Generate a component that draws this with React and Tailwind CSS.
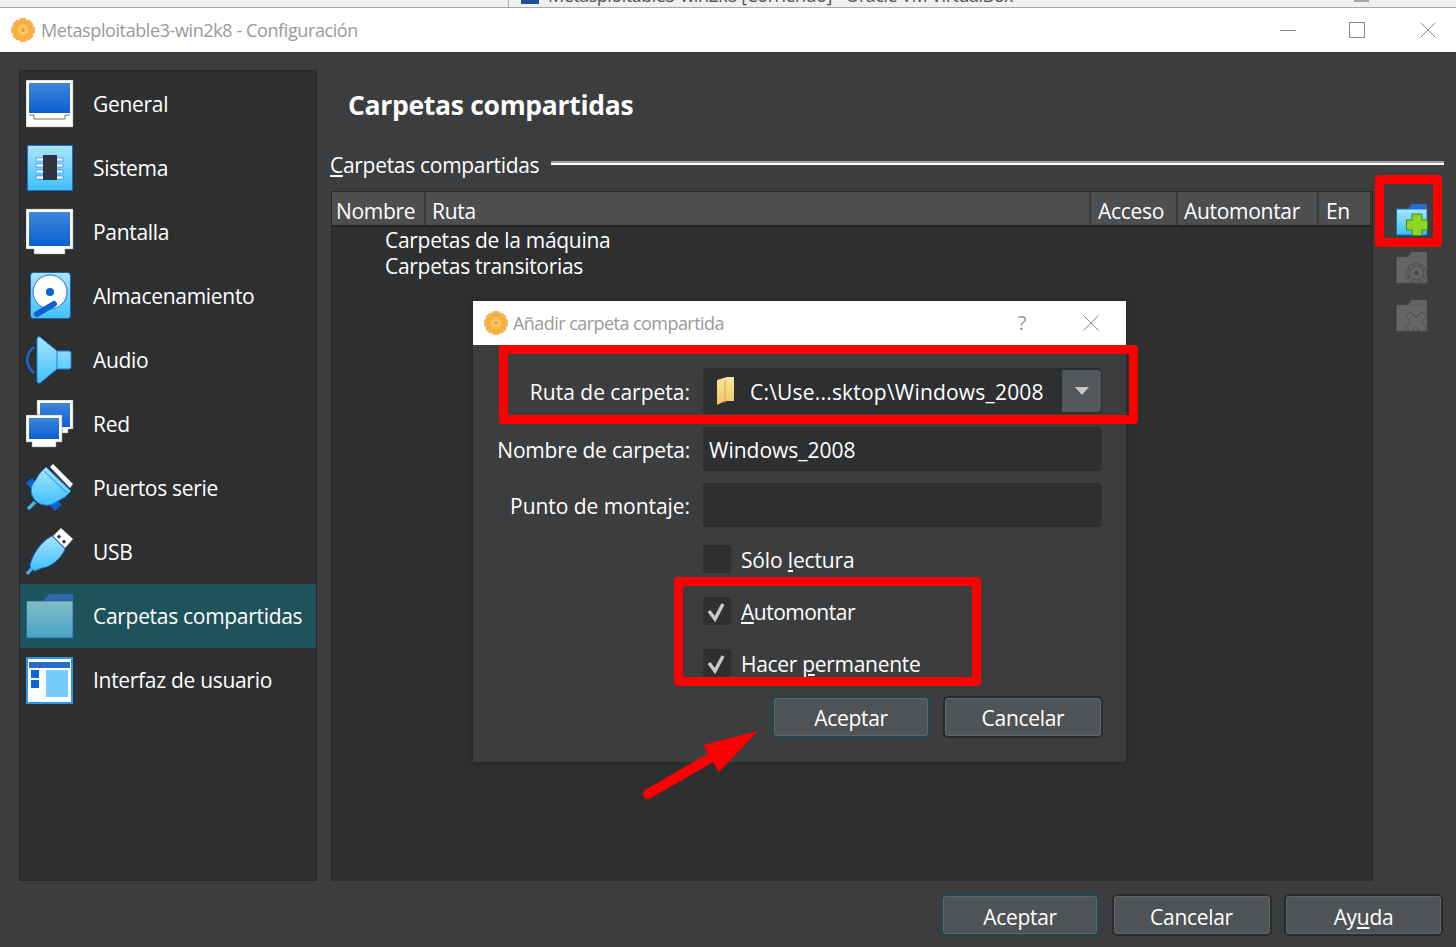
import React from "react";

const GRAD_BLUE = ["#3f86dc", "#0a5fcf"];

// shared gradients for every drawn icon
const IconDefs = () => (
  <svg width="0" height="0" className="absolute">
    <defs>
      <linearGradient id="screen" x1="0" y1="0" x2="0" y2="1">
        <stop offset="0" stopColor={GRAD_BLUE[0]} />
        <stop offset="1" stopColor={GRAD_BLUE[1]} />
      </linearGradient>
      <linearGradient id="sky" x1="0" y1="0" x2="0" y2="1">
        <stop offset="0" stopColor="#a8e6ff" />
        <stop offset="1" stopColor="#3fc0ff" />
      </linearGradient>
      <linearGradient id="teal" x1="0" y1="0" x2="0" y2="1">
        <stop offset="0" stopColor="#82bcc6" />
        <stop offset="1" stopColor="#48a4c8" />
      </linearGradient>
      <linearGradient id="manila" x1="0" y1="0" x2="0" y2="1">
        <stop offset="0" stopColor="#fbe7a0" />
        <stop offset="1" stopColor="#f0c560" />
      </linearGradient>
      <radialGradient id="orange">
        <stop offset="0" stopColor="#ffe08a" />
        <stop offset="1" stopColor="#f7a52e" />
      </radialGradient>
    </defs>
  </svg>
);

const Svg = ({ children }) => (
  <svg width="48" height="48" viewBox="0 0 48 48" className="shrink-0">
    {children}
  </svg>
);

const GeneralIcon = () => (
  <Svg>
    <rect x="0" y="0" width="47" height="47" fill="#fff" stroke="#8a8a8a" strokeWidth="0.5" />
    <rect x="3" y="3" width="41" height="30" fill="url(#screen)" />
    <path d="M3 35H8V39H39V35H44" fill="none" stroke="#777" strokeWidth="1" />
  </Svg>
);

const SystemIcon = () => (
  <Svg>
    <rect x="1.5" y="1.5" width="45" height="45" fill="url(#sky)" stroke="#1c6fd0" />
    {[14, 20, 26, 32].map((y) => (
      <rect key={y} x="10" y={y} width="27" height="3" fill="#fff" stroke="#2a78d4" strokeWidth="0.6" />
    ))}
    <rect x="17" y="11" width="14" height="25" fill="#2f3340" />
  </Svg>
);

const ScreenIcon = () => (
  <Svg>
    <path d="M0 1H47V41H39V46H8V41H0Z" fill="#fff" stroke="#8a8a8a" strokeWidth="0.5" />
    <rect x="3" y="4" width="41" height="34" fill="url(#screen)" />
  </Svg>
);

const StorageIcon = () => (
  <Svg>
    <rect x="4.5" y="0.5" width="40" height="46" rx="3" fill="url(#sky)" stroke="#1c5fb0" />
    <circle cx="24" cy="20" r="17" fill="#fff" stroke="#1c6fd0" />
    <circle cx="24" cy="20" r="4" fill="#0d62cc" />
    <path d="M11 42L28 32" stroke="#0d62cc" strokeWidth="6" strokeLinecap="round" />
  </Svg>
);

const AudioIcon = () => (
  <Svg>
    <path d="M8 11C-1 18 -1 29 8 37" fill="none" stroke="#1a68c8" strokeWidth="2.5" />
    <path d="M11 3Q11 0 14 1L31 15H43Q45 15 45 17V31Q45 33 43 33H31L14 47Q11 48 11 45Z" fill="url(#sky)" stroke="#1c80e0" />
    <path d="M31 15V33" stroke="#1c80e0" />
  </Svg>
);

const NetworkIcon = () => (
  <Svg>
    <path d="M11 0H47V29H42V33H36V15H11Z" fill="#fff" stroke="#888" strokeWidth="0.5" />
    <rect x="14" y="3" width="30" height="24" fill="url(#screen)" />
    <path d="M0 15H36V42H30V47H6V42H0Z" fill="#fff" stroke="#888" strokeWidth="0.5" />
    <rect x="3" y="18" width="30" height="21" fill="url(#screen)" />
  </Svg>
);

const SerialIcon = () => (
  <Svg>
    <path d="M0 19L6 14L11 19L5 25Z" fill="#0d62cc" />
    <path d="M24 42L31 36L36 41L29 47Z" fill="#0d62cc" />
    <path d="M9 38L2 45" stroke="#3fb4f8" strokeWidth="3.5" />
    <path d="M14 9L20 3L45 27L39 33L30 38C24 43 14 42 9 36C4 30 4 22 9 17Z" fill="url(#sky)" stroke="#1c80e0" />
    <path d="M18 7L41 29" stroke="#1c80e0" />
    <path d="M24 3L27 0L47 20L44 24Z" fill="#fff" stroke="#888" strokeWidth="0.5" />
  </Svg>
);

const UsbIcon = () => (
  <Svg>
    <path d="M27 8L35 0L47 11L39 20Z" fill="#fff" stroke="#888" strokeWidth="0.5" />
    <rect x="32" y="7" width="3" height="3" fill="#333" transform="rotate(45 33 8)" />
    <rect x="37" y="12" width="3" height="3" fill="#333" transform="rotate(45 38 13)" />
    <path d="M26 8L39 21C36 28 28 38 16 40L8 43L4 38C6 28 14 14 26 8Z" fill="url(#sky)" stroke="#1c80e0" />
    <path d="M7 39L1 46" stroke="#3fb4f8" strokeWidth="3" />
  </Svg>
);

const FolderIcon = () => (
  <Svg>
    <path d="M17 9L23 2H47V10Z" fill="#2a68b0" />
    <rect x="0.5" y="9" width="46.5" height="37" fill="url(#teal)" stroke="#24619f" strokeWidth="0.8" />
  </Svg>
);

const UiIcon = () => (
  <Svg>
    <rect x="1" y="2" width="45" height="45" fill="#fff" stroke="#2a98ee" strokeWidth="2" />
    <rect x="3" y="6" width="41" height="6" fill="#2a6cc8" />
    <rect x="5" y="14" width="8" height="8" fill="#0d66d6" />
    <rect x="5" y="24" width="8" height="8" fill="#0d66d6" />
    <rect x="20" y="14" width="22" height="27" fill="#76ccff" />
  </Svg>
);

const TEETH = [0, 45, 90, 135, 180, 225, 270, 315];

const GearLogo = () => (
  <svg width="24" height="24" viewBox="0 0 24 24" className="shrink-0">
    {TEETH.map((a) => (
      <rect key={a} x="8.5" y="0.5" width="7" height="7" rx="1.5" fill="#fbb648" stroke="#e0932a" strokeWidth="0.5" transform={`rotate(${a} 12 12)`} />
    ))}
    <circle cx="12" cy="12" r="8.5" fill="url(#orange)" />
    <circle cx="12" cy="12" r="2" fill="#ee9a30" />
  </svg>
);

const GrayFolder = ({ children }) => (
  <svg width="32" height="32" viewBox="0 0 32 32" className="shrink-0">
    <path d="M11 5L16 0H31V6Z" fill="#616263" />
    <rect x="0.5" y="5" width="30.5" height="26" fill="#646566" stroke="#555" strokeWidth="0.6" />
    {children}
  </svg>
);

const AddFolder = () => (
  <svg width="32" height="32" viewBox="0 0 32 32" className="shrink-0">
    <path d="M11 5L16 0H31V6Z" fill="#2a6cc8" />
    <rect x="0.5" y="5" width="30.5" height="26" fill="url(#sky)" stroke="#1c6fd0" />
    <path d="M16 10H26V16H31.5V26H26V31.5H16V26H10.5V16H16Z" fill="#8fd428" stroke="#3f8a10" strokeWidth="1" />
  </svg>
);

const SIDEBAR = [
  { label: "General", Icon: GeneralIcon },
  { label: "Sistema", Icon: SystemIcon },
  { label: "Pantalla", Icon: ScreenIcon },
  { label: "Almacenamiento", Icon: StorageIcon },
  { label: "Audio", Icon: AudioIcon },
  { label: "Red", Icon: NetworkIcon },
  { label: "Puertos serie", Icon: SerialIcon },
  { label: "USB", Icon: UsbIcon },
  { label: "Carpetas compartidas", Icon: FolderIcon, active: true },
  { label: "Interfaz de usuario", Icon: UiIcon },
];

const COLUMNS = [
  { label: "Nombre", w: "w-[94px]", pad: "pl-[4px]" },
  { label: "Ruta", w: "w-[665px]", pad: "pl-[6px]" },
  { label: "Acceso", w: "w-[87px]", pad: "pl-[7px]" },
  { label: "Automontar", w: "w-[141px]", pad: "pl-[6px]" },
  { label: "En", w: "w-[53px]", pad: "pl-[7px]" },
];

const Button = ({ children, primary, w = "w-[158px]", pt = "pt-[6px]" }) => (
  <div
    className={`${w} ${pt} flex h-[42px] items-center justify-center rounded-[5px] border-2 bg-[#505355] text-[21px] text-white shadow-[inset_0_0_0_1px_#636567] ${
      primary ? "border-[#1d4a50]" : "border-[#2a2b2d]"
    }`}
  >
    {children}
  </div>
);

const Check = ({ checked }) => (
  <div className="flex h-[28px] w-[28px] items-center justify-center rounded-[2px] bg-[#2e2f31]">
    {checked && (
      <svg width="28" height="28" viewBox="0 0 28 28">
        <path d="M6 14L12 22L20 7" fill="none" stroke="#c8c8c8" strokeWidth="3.5" />
      </svg>
    )}
  </div>
);

const WindowClose = ({ size = 16 }) => (
  <svg width={size} height={size} viewBox="0 0 16 16">
    <path d="M0.5 0.5L15.5 15.5M15.5 0.5L0.5 15.5" stroke="#8a8a8a" strokeWidth="1" />
  </svg>
);

const FieldLabel = ({ children, spacing }) => (
  <div className={`w-[217px] shrink-0 pt-[4px] text-right text-[21px] text-white ${spacing}`}>{children}</div>
);

const AddDialog = () => (
  <div className="absolute left-[473px] top-[301px] flex h-[461px] w-[653px] flex-col bg-[#3c3d3f] shadow-[0_0_3px_#222]">
    <div className="flex h-[44px] shrink-0 items-center bg-white pl-[11px]">
      <GearLogo />
      <span className="ml-[5px] text-[18px] tracking-[-0.55px] text-[#9a9a9a]">Añadir carpeta compartida</span>
      <span className="ml-auto mr-[57px] text-[20px] text-[#9a9a9a]">?</span>
      <div className="mr-[27px]">
        <WindowClose />
      </div>
    </div>
    <div className="flex flex-col pt-[23px]">
      <div className="mr-[24px] flex h-[46px] items-center">
        <FieldLabel spacing="tracking-[0px]">Ruta de carpeta:</FieldLabel>
        <div className="ml-[13px] flex h-full flex-1 items-center rounded-[4px] bg-[#2e2f31] pl-[13px]">
          <svg width="20" height="28" viewBox="0 0 20 28" className="shrink-0">
            <path d="M1 3L11 0H18V24H9L1 28Z" fill="url(#manila)" />
            <path d="M9 3V26" stroke="#d9ac50" />
          </svg>
          <span className="ml-[14px] pt-[4px] text-[21px] tracking-[0.2px] text-white">C:\Use...sktop\Windows_2008</span>
          <div className="ml-auto mr-[1px] flex h-[42px] w-[39px] items-center justify-center rounded-r-[4px] bg-[#54575a]">
            <div className="h-0 w-0 border-x-[7px] border-t-[8px] border-x-transparent border-t-[#c9c9c9]" />
          </div>
        </div>
      </div>
      <div className="mr-[24px] mt-[13px] flex h-[44px] items-center">
        <FieldLabel spacing="tracking-[-0.2px]">Nombre de carpeta:</FieldLabel>
        <div className="ml-[13px] flex h-full flex-1 items-center rounded-[4px] bg-[#2e2f31] pl-[6px] pt-[4px] text-[21px] tracking-[0px] text-white">
          Windows_2008
        </div>
      </div>
      <div className="mr-[24px] mt-[12px] flex h-[44px] items-center">
        <FieldLabel spacing="tracking-[-0.05px]">Punto de montaje:</FieldLabel>
        <div className="ml-[13px] h-full flex-1 rounded-[4px] bg-[#2e2f31]" />
      </div>
      <div className="ml-[230px] mt-[18px] flex flex-col gap-[24px] text-[21px] text-white">
        <div className="flex h-[28px] items-center gap-[10px]">
          <Check />
          <span className="pt-[4px] tracking-[-0.15px]">
            Sólo <span className="underline">l</span>ectura
          </span>
        </div>
        <div className="flex h-[28px] items-center gap-[10px]">
          <Check checked />
          <span className="pt-[4px] tracking-[-0.5px]">
            <span className="underline">A</span>utomontar
          </span>
        </div>
        <div className="flex h-[28px] items-center gap-[10px]">
          <Check checked />
          <span className="pt-[4px]">
            Hacer <span className="underline">p</span>ermanente
          </span>
        </div>
      </div>
      <div className="mr-[23px] mt-[19px] flex justify-end gap-[13px]">
        <Button primary pt="pt-[4px]">Aceptar</Button>
        <Button w="w-[160px]" pt="pt-[4px]">Cancelar</Button>
      </div>
    </div>
  </div>
);

const Annotations = () => (
  <>
    <div className="absolute left-[499px] top-[345px] h-[79px] w-[639px] rounded-[4px] border-[9px] border-[#ff0000]" />
    <div className="absolute left-[674px] top-[577px] h-[109px] w-[307px] rounded-[4px] border-[9px] border-[#ff0000]" />
    <div className="absolute left-[1375px] top-[175px] h-[72px] w-[67px] rounded-[4px] border-[9px] border-[#ff0000]" />
    <svg className="absolute left-[640px] top-[725px]" width="125" height="80" viewBox="0 0 125 80">
      <path d="M118 6L63 20L79 47Z" fill="#ff0000" />
      <path d="M8 69L72 32" stroke="#ff0000" strokeWidth="10" strokeLinecap="round" />
    </svg>
  </>
);

export default function App() {
  return (
    <div className="relative flex h-[947px] w-[1456px] flex-col overflow-hidden bg-[#3c3d3f] font-['Open_Sans',sans-serif] tracking-[-0.3px]">
      <IconDefs />

      {/* window behind, only its bottom edge shows */}
      <div className="relative h-[8px] shrink-0 overflow-hidden border-b border-[#a8a8a8] bg-[#f0f0f0]">
        <div className="absolute left-[508px] top-0 h-full w-px bg-[#a8a8a8]" />
        <div className="absolute left-[521px] top-[-14px] h-[18px] w-[18px] bg-[#1c4f9c]" />
        <span className="absolute left-[548px] top-[-18px] whitespace-nowrap text-[18px] tracking-[-0.5px] text-[#555]">
          Metasploitable3-win2k8 [Corriendo] - Oracle VM VirtualBox
        </span>
        <div className="absolute left-[1354px] top-0 h-[2px] w-[15px] bg-[#a8a8a8]" />
      </div>

      {/* title bar */}
      <div className="flex h-[44px] shrink-0 items-center bg-white pl-[11px]">
        <GearLogo />
        <span className="ml-[6px] text-[18px] tracking-[-0.4px] text-[#9a9a9a]">Metasploitable3-win2k8 - Configuración</span>
        <div className="ml-auto mr-[53px] h-px w-[16px] bg-[#8a8a8a]" />
        <div className="mr-[55px] h-[16px] w-[16px] border border-[#8a8a8a]" />
        <div className="mr-[20px]">
          <WindowClose />
        </div>
      </div>

      <div className="flex min-h-0 flex-1 pl-[19px] pt-[18px]">
        {/* sidebar */}
        <div className="w-[298px] shrink-0 border border-[#29292b] bg-[#2e2f31] pt-[1px]">
          {SIDEBAR.map(({ label, Icon, active }) => (
            <div
              key={label}
              className={`flex h-[64px] items-center pl-[6px] text-[21px] text-white ${active ? "bg-[#1f535c]" : ""}`}
            >
              <Icon />
              <span className="ml-[19px] pt-[2px]">{label}</span>
            </div>
          ))}
        </div>

        {/* page */}
        <div className="flex min-w-0 flex-1 flex-col pl-[13px]">
          <h1 className="pl-[18px] pt-[17px] text-[26.5px] font-bold leading-[36px] text-white">Carpetas compartidas</h1>
          <div className="mt-[24px] flex h-[34px] items-center pr-[12px]">
            <span className="pt-[4px] text-[21px] text-white">
              <span className="underline">C</span>arpetas compartidas
            </span>
            <div className="mb-[2px] ml-[12px] h-[4px] flex-1 border-t-2 border-[#a0a0a0] bg-white" />
          </div>
          <div className="mt-[10px] flex min-h-0 flex-1">
            <div className="ml-[1px] flex w-[1042px] flex-col border-x border-t border-[#29292b] bg-[#2e2f31]">
              <div className="flex h-[35px] shrink-0 border-b-2 border-[#232426]">
                {COLUMNS.map((c) => (
                  <div
                    key={c.label}
                    className={`${c.w} ${c.pad} flex items-center border-r-2 border-[#38393b] bg-[#4c4e50] pt-[6px] text-[21px] text-white`}
                  >
                    {c.label}
                  </div>
                ))}
              </div>
              <div className="pl-[53px] text-[21px] leading-[26px] text-white">
                <div>Carpetas de la máquina</div>
                <div>Carpetas transitorias</div>
              </div>
            </div>
            <div className="ml-[23px] flex flex-col gap-[16px] pt-[13px]">
              <AddFolder />
              <GrayFolder>
                {TEETH.map((a) => (
                  <rect key={a} x="18" y="11" width="5" height="5" fill="#666" stroke="#4f4f50" strokeWidth="1" transform={`rotate(${a} 20.5 21)`} />
                ))}
                <circle cx="20.5" cy="21" r="7" fill="#666" stroke="#4f4f50" strokeWidth="1" />
                <circle cx="20.5" cy="21" r="2.5" fill="#4a4a4a" />
              </GrayFolder>
              <GrayFolder>
                <path d="M14 12L20 17L26 12L31 17L25 22L31 27L26 32L20 27L14 32L10 27L15 22L10 17Z" fill="#666" stroke="#4f4f50" strokeWidth="1" />
              </GrayFolder>
            </div>
          </div>
        </div>
      </div>

      {/* footer buttons */}
      <div className="flex h-[66px] shrink-0 items-start justify-end gap-[12.5px] pr-[13px] pt-[13px]">
        <Button primary>Aceptar</Button>
        <Button w="w-[160px]">Cancelar</Button>
        <Button w="w-[159px]">
          <span>
            Ay<span className="underline">u</span>da
          </span>
        </Button>
      </div>

      <AddDialog />
      <Annotations />
    </div>
  );
}
